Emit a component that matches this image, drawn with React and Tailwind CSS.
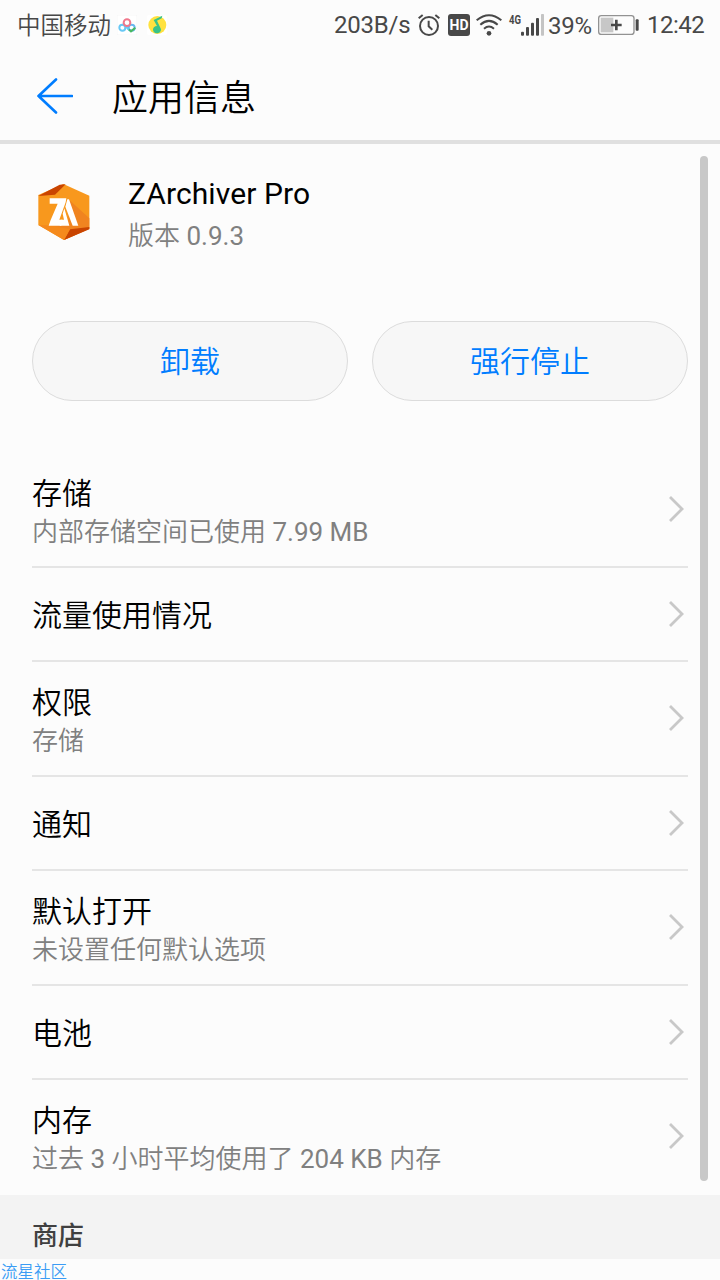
const rows = [
  { title: '存储', sub: '内部存储空间已使用 7.99 MB' },
  { title: '流量使用情况' },
  { title: '权限', sub: '存储' },
  { title: '通知' },
  { title: '默认打开', sub: '未设置任何默认选项' },
  { title: '电池' },
  { title: '内存', sub: '过去 3 小时平均使用了 204 KB 内存' },
];

function CloudIcon() {
  return (
    <svg className="ml-[6px] h-5 w-5" viewBox="0 0 60 60" fill="none" strokeWidth="6">
      <rect width="60" height="60" rx="5" fill="#fff" stroke="#f3f3f3" strokeWidth="2" />
      <circle cx="16" cy="38" r="9" stroke="#68c8f5" />
      <circle cx="44" cy="38" r="9" stroke="#68b8f0" />
      <path d="M16 29Q24 29 30 38T44 47" stroke="#68c8f5" />
      <circle cx="30" cy="23" r="10" stroke="#f0788c" />
      <path d="M36 43L42 49L55 38" stroke="#49b862" />
    </svg>
  );
}

function MusicIcon() {
  return (
    <svg className="ml-[10px] h-5 w-5" viewBox="0 0 60 60">
      <rect width="60" height="60" rx="5" fill="#fff" />
      <circle cx="31" cy="30" r="27" fill="#ffe23f" />
      <path d="M46 2L44 10L30 17L40 38A12 11 0 1 1 30 33L20 15Z" fill="#39c389" />
    </svg>
  );
}

function AlarmIcon() {
  return (
    <svg className="ml-2 h-[22px] w-[22px]" viewBox="0 0 66 66" fill="none" stroke="#484848" strokeWidth="6">
      <circle cx="33" cy="36" r="27" />
      <path d="M32 20V37L43 47" />
      <path d="M2 13L14 3M52 3L64 13" />
    </svg>
  );
}

function WifiIcon() {
  return (
    <svg className="ml-[6px] h-[22px] w-[26px]" viewBox="0 0 78 66" fill="none" stroke="#484848" strokeWidth="6">
      <path d="M2 19Q39 -12 76 19M13 32Q39 9 65 32M24 44Q39 31 54 44" />
      <circle cx="39" cy="58" r="7" fill="#484848" stroke="none" />
    </svg>
  );
}

function SignalIcon() {
  return (
    <svg className="h-[22px] w-[23px]" viewBox="0 0 69 66" fill="#484848">
      <rect x="0" y="53" width="9" height="12" rx="3" />
      <rect x="15" y="39" width="9" height="26" rx="3" />
      <rect x="30" y="26" width="9" height="39" rx="3" />
      <rect x="45" y="12" width="9" height="53" rx="3" />
      <rect x="60" y="0" width="9" height="65" rx="2" fill="#c4c4c4" />
    </svg>
  );
}

function BatteryIcon() {
  return (
    <svg className="ml-[7px] h-5 w-[41px]" viewBox="0 0 123 60">
      <rect x="2" y="2" width="106" height="56" rx="8" fill="none" stroke="#929292" strokeWidth="4" />
      <rect x="8" y="8" width="38" height="44" fill="#c7c7c7" />
      <path d="M39 30H71M55 14V46" stroke="#484848" strokeWidth="8" />
      <rect x="113" y="13" width="9" height="34" rx="3" fill="#484848" />
    </svg>
  );
}

function StatusBar() {
  return (
    <div className="flex h-[50px] shrink-0 items-center whitespace-nowrap pl-[17px] text-[24px] leading-[50px] text-[#484848]">
      <span className="w-[94px] pt-px text-[23.5px]">中国移动</span>
      <CloudIcon />
      <MusicIcon />
      <div className="ml-auto flex items-center pr-[15px]">
        <span className="w-[76px] tracking-[-0.2px]">203B/s</span>
        <AlarmIcon />
        <span className="ml-2 flex h-[22px] w-[22px] items-center justify-center rounded-[3px] bg-[#484848] text-[14px] font-bold leading-none text-white">
          HD
        </span>
        <WifiIcon />
        <span className="ml-[7px] flex h-[22px] w-[12px] items-start">
          <svg className="h-[16px] w-[12px] -mt-[3px] shrink-0 overflow-visible" viewBox="0 0 12 16" fill="#484848">
            <text x="0" y="13" textLength="12" lengthAdjust="spacingAndGlyphs" className="text-[13px] font-bold">4G</text>
          </svg>
        </span>
        <SignalIcon />
        <span className="ml-[4px] w-[43px] pt-[2px] tracking-[-0.3px]">39%</span>
        <BatteryIcon />
        <span className="ml-2 w-[58px] tracking-[-0.5px]">12:42</span>
      </div>
    </div>
  );
}

function AppLogo() {
  return (
    <svg className="h-[58px] w-[54px]" viewBox="112 369 162 174">
      <path d="M191 372L269 407V506L193 540L116 495V405Z" fill="#f8981d" />
      <path d="M209 420L269 475V506L193 540L150 496L205 496Z" fill="#f08420" />
      <path d="M116 408L180 374L198 373L166 404Z" fill="#c94400" />
      <path d="M269 501V508L193 540L211 508Z" fill="#c94400" />
      <path d="M116 495L193 540L211 508L150 496Z" fill="#f58a1c" />
      <path d="M150 415H200L198 427L179 479H188L185 497H147L153 480L174 431H150Z" fill="#fff" />
      <path d="M203 418L208 418L236 497H219L197 440Z" fill="#fff" />
      <path d="M194 445L209 497H180L183 479H193L189 461Z" fill="#fff" />
    </svg>
  );
}

function Row({ title, sub, last }) {
  return (
    <div
      className={`flex items-center justify-between border-b-2 ${sub ? 'h-[115px]' : 'h-[94px]'} ${last ? 'border-transparent' : 'border-[#e5e5e5]'}`}
    >
      <div className={`flex flex-col ${sub ? 'pt-[5px]' : 'pt-[3px]'}`}>
        <div className="text-[30px] leading-[40px] text-black">{title}</div>
        {sub && <div className="text-[26px] leading-[36px] text-[#808080]">{sub}</div>}
      </div>
      <svg className={`mr-[4px] h-7 w-4 ${sub ? 'mb-px' : ''}`} viewBox="0 0 16 28" fill="none" stroke="#c8c8c8" strokeWidth="2.8">
        <path d="M2 2L14 14L2 26" />
      </svg>
    </div>
  );
}

export default function App() {
  return (
    <div className="relative flex h-[1280px] w-[720px] flex-col overflow-hidden bg-[#fcfcfc] font-[Roboto,'Noto_Sans_CJK_SC_DemiLight','Noto_Sans_CJK_SC',sans-serif]">
      <StatusBar />
      <header className="flex h-[94px] shrink-0 items-center border-b-4 border-[#e0e0e0] pl-[37px] pt-[2px]">
        <svg className="h-9 w-9" viewBox="0 0 36 36" fill="none" stroke="#007dff" strokeWidth="2.6" strokeLinecap="round" strokeLinejoin="round">
          <path d="M19 1.5L1.5 18L19 34.5M1.5 18H35" />
        </svg>
        <h1 className="ml-[39px] pt-[6px] text-[36px] leading-[50px] text-black">应用信息</h1>
      </header>
      <main className="flex shrink-0 flex-col px-8">
        <section className="flex h-[177px] items-start pl-[5px] pt-[29px]">
          <div className="pt-[10px]">
            <AppLogo />
          </div>
          <div className="ml-[37px]">
            <div className="text-[30px] leading-[42px] tracking-[0.1px] text-black">ZArchiver Pro</div>
            <div className="text-[26px] leading-[42px] text-[#808080]">版本 0.9.3</div>
          </div>
        </section>
        <div className="flex gap-6">
          {['卸载', '强行停止'].map((label) => (
            <button key={label} className="h-20 flex-1 rounded-full border border-[#dcdcdc] bg-[#f7f7f7] pt-[2px] text-[30px] leading-[40px] text-[#007dff]">
              {label}
            </button>
          ))}
        </div>
        <section className="mt-[52px]">
          {rows.map((r, i) => (
            <Row key={r.title} {...r} last={i === rows.length - 1} />
          ))}
        </section>
      </main>
      <div className="flex h-16 shrink-0 items-end bg-[#f3f3f3] pb-[5px] pl-8 font-[Roboto,'Noto_Sans_CJK_SC',sans-serif] text-[26px] font-medium leading-[36px] text-[#404040]">商店</div>
      <div className="h-[21px] shrink-0 pl-px pt-[3px] font-['Noto_Sans_CJK_SC_DemiLight','Noto_Sans_CJK_SC',sans-serif] text-[16.5px] leading-[18px] text-[#3b9cf5]">流星社区</div>
      <div className="absolute right-3 top-[156px] h-[1025px] w-2 rounded-full bg-[#c8c8c8]" />
    </div>
  );
}
